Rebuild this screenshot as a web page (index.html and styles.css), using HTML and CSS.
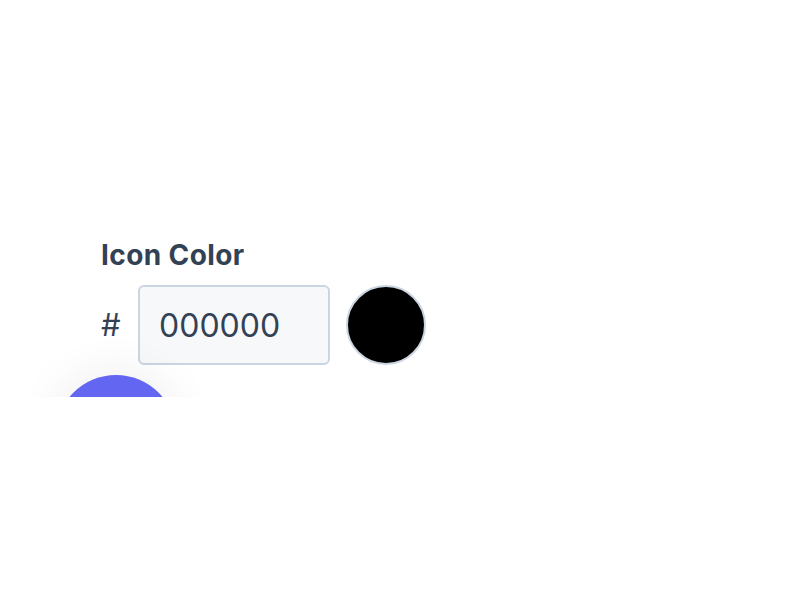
FILE: index.html
```html
<!DOCTYPE html>
<html lang="en">
<head>
<meta charset="utf-8">
<title>Icon Color</title>
<link rel="stylesheet" href="styles.css">
</head>
<body>
<div class="frame">
  <div class="field">
    <label class="label" for="hex">Icon Color</label>
    <div class="row">
      <span class="hash">#</span>
      <input id="hex" class="hex-input" type="text" value="000000">
      <span class="swatch"></span>
    </div>
    <div class="fab"></div>
  </div>
</div>
</body>
</html>
```
FILE: styles.css
```css
html, body {
  margin: 0;
  padding: 0;
  background: #ffffff;
}
body {
  font-family: "Inter", "Open Sans", sans-serif;
  color: #334155;
}
.frame {
  height: 397px;
  overflow: hidden;
  box-sizing: border-box;
  padding: 239px 0 0 100px;
}
.field {
  display: flex;
  flex-direction: column;
  align-items: flex-start;
}
.label {
  display: block;
  font-size: 28px;
  line-height: 32px;
  font-weight: 700;
  letter-spacing: 0.4px;
  color: #334155;
  margin-bottom: 14px;
  padding-left: 1px;
}
.row {
  display: flex;
  align-items: center;
  gap: 16px;
  height: 80px;
}
.hash {
  font-size: 31px;
  line-height: 32px;
  width: 21px;
  padding-left: 1px;
  color: #334155;
}
.hex-input {
  box-sizing: border-box;
  width: 192px;
  height: 80px;
  margin: 0;
  border: 2px solid #cbd5e1;
  border-radius: 6px;
  background: #f6f8fa;
  padding: 0 0 0 19px;
  font-family: "Inter", "Open Sans", sans-serif;
  font-size: 32px;
  color: #334155;
  outline: none;
}
.swatch {
  box-sizing: border-box;
  width: 80px;
  height: 80px;
  border-radius: 50%;
  background: #000000;
  border: 2px solid #cbd5e1;
}
.fab {
  width: 120px;
  height: 120px;
  margin: 10px 0 0 -44px;
  border-radius: 50%;
  background: #6366f1;
  box-shadow: 0 0 40px 10px rgba(0, 0, 0, 0.05);
}
```
